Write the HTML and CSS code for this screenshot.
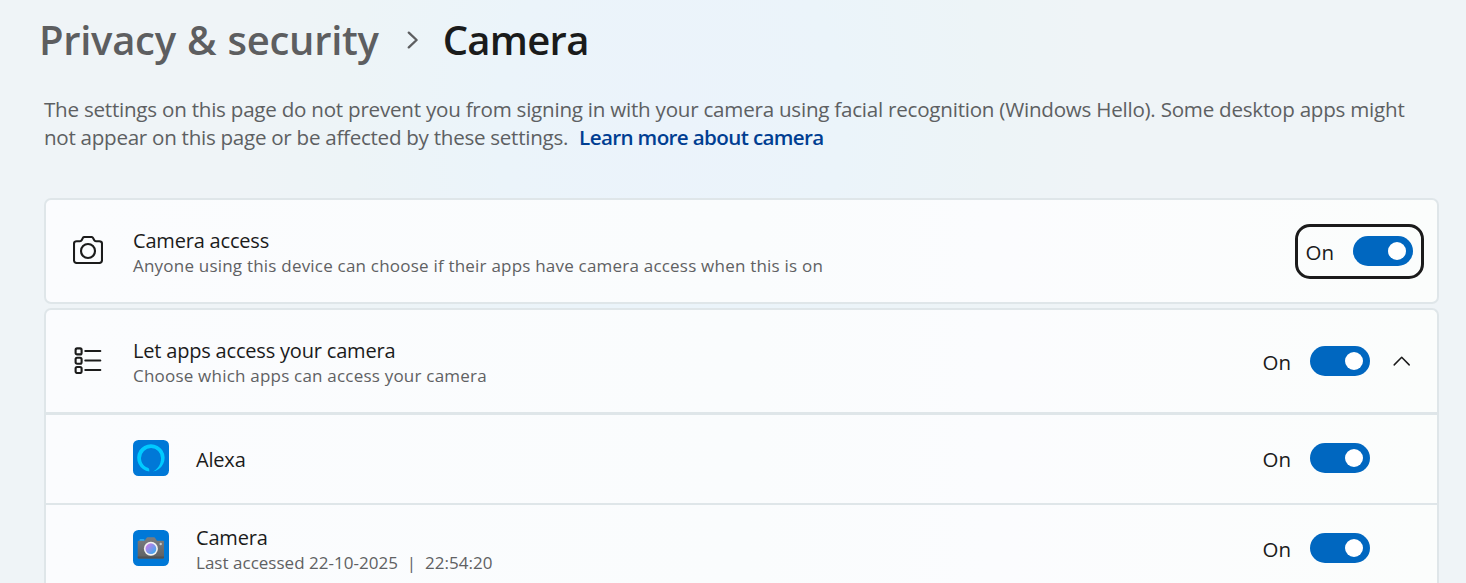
FILE: index.html
```html
<!DOCTYPE html>
<html lang="en">
<head>
<meta charset="utf-8">
<title>Privacy &amp; security - Camera</title>
<link rel="stylesheet" href="styles.css">
</head>
<body>
<main class="page">
  <nav class="breadcrumb">
    <span class="crumb">Privacy &amp; security</span>
    <svg class="crumb-arrow" width="12" height="18" viewBox="0 0 12 18"><path d="M1.8 1.6 9.6 9 1.8 16.4"/></svg>
    <h1 class="crumb current">Camera</h1>
  </nav>
  <p class="intro">The settings on this page do not prevent you from signing in with your camera using facial recognition (Windows Hello). Some desktop apps might<br><span class="intro-end">not appear on this page or be affected by these settings.</span><a class="link">Learn more about camera</a></p>

  <section class="card">
    <div class="row header-row">
      <svg class="row-icon" width="30" height="28" viewBox="0 0 30 28"><path d="M3.700 5.200H7c.9 0 1.400-.4 1.800-1.100l.8-1.700C10 1.500 10.600 1 11.500 1h7c.9 0 1.400.5 1.800 1.400l.8 1.700c.4.7.9 1.100 1.800 1.100h3.400C28 5.200 29 6.200 29 7.700v16.600c0 1.500-1 2.700-2.700 2.700H3.700C2 27 1 25.800 1 24.300V7.700C1 6.200 2 5.200 3.700 5.200Z"/><circle cx="15" cy="15" r="7"/></svg>
      <div class="labels"><div class="title">Camera access</div><div class="sub">Anyone using this device can choose if their apps have camera access when this is on</div></div>
      <div class="control focused"><span class="state">On</span><span class="toggle"></span></div>
    </div>
  </section>

  <section class="card group">
    <div class="row header-row">
      <svg class="row-icon" width="30" height="28" viewBox="0 0 30 28"><rect x="2.600" y="2.400" width="6" height="6" rx="1.500"/><rect x="2.600" y="11.700" width="6" height="6" rx="1.500"/><rect x="2.600" y="21" width="6" height="6" rx="1.500"/><path d="M12.300 5h15M12.300 14.500h15M12.300 24h15"/></svg>
      <div class="labels"><div class="title">Let apps access your camera</div><div class="sub">Choose which apps can access your camera</div></div>
      <div class="control"><span class="state">On</span><span class="toggle"></span></div>
      <svg class="chevron" width="18" height="12" viewBox="0 0 18 12"><path d="M1.200 9.900 8.700 2.300l7.500 7.600"/></svg>
    </div>
    <div class="row app-row">
      <svg class="app-icon" width="36" height="36" viewBox="0 0 36 36"><rect width="36" height="36" rx="5.500" fill="#0078d7"/><path fill="#00caff" fill-rule="evenodd" d="M16.300 31.500A13.700 13.700 0 1 1 19.500 31.500C24.600 29.400 28 24.500 28 18.200A10 10 0 1 0 8 18C8 22.800 11 26.600 14.900 27.800C16.100 28.200 16.400 29.500 16.300 31.500Z"/></svg>
      <div class="labels"><div class="title">Alexa</div></div>
      <div class="control"><span class="state">On</span><span class="toggle"></span></div>
    </div>
    <div class="row app-row">
      <svg class="app-icon" width="36" height="36" viewBox="0 0 36 36">
        <defs>
          <linearGradient id="body" x1="0" y1="0" x2="0" y2="1"><stop offset="0" stop-color="#7b7d80"/><stop offset="1" stop-color="#5e6063"/></linearGradient>
          <linearGradient id="lens" x1="0" y1="0" x2="1" y2="1"><stop offset=".2" stop-color="#b982e8"/><stop offset="1" stop-color="#27b0f2"/></linearGradient>
        </defs>
        <rect width="36" height="36" rx="5.500" fill="#0078d7"/>
        <rect x="6.500" y="9" width="5" height="3" rx="1" fill="#25a9f2"/>
        <path fill="url(#body)" d="M5.700 10.700H11.500L13.500 7.900Q13.900 7.300 14.600 7.300H21Q21.700 7.300 22.100 7.900L24 10.700H30.200Q31 10.700 31 11.500V27.500Q31 28.400 30.100 28.400H5.600Q4.700 28.400 4.700 27.500V11.700Q4.700 10.700 5.700 10.700Z"/>
        <path fill="#505255" d="M4.700 26.500H31v1Q31 28.400 30.100 28.400H5.600Q4.700 28.400 4.700 27.500Z"/>
        <circle cx="17.900" cy="18.700" r="7" fill="#f2f2f3"/><circle cx="17.900" cy="18.700" r="5.400" fill="url(#lens)"/><circle cx="27.700" cy="14" r="1.200" fill="#c5c9cc"/>
      </svg>
      <div class="labels"><div class="title">Camera</div><div class="sub accessed">Last accessed 22-10-2025 &nbsp;|&nbsp; 22:54:20</div></div>
      <div class="control"><span class="state">On</span><span class="toggle"></span></div>
    </div>
  </section>
</main>
</body>
</html>
```
FILE: styles.css
```css
* { box-sizing: border-box; }

body {
  margin: 0;
  font-family: "Open Sans", "Noto Sans", sans-serif;
  color: #1b1b1b;
  background: radial-gradient(ellipse 430px 520px at 670px 120px, #ebf3fb 0%, #ebf4fa 40%, #edf4f7 75%, #eff4f7 100%);
}

.page {
  display: flex;
  flex-direction: column;
  height: 583px;
  padding: 13px 27px 0 44px;
  overflow: hidden;
}

.breadcrumb {
  display: flex;
  flex: none;
  align-items: center;
  height: 54px;
  margin-left: -5px;
}

.crumb {
  margin: 0;
  font-size: 40px;
  font-weight: 600;
  line-height: 54px;
  letter-spacing: -.3px;
  word-spacing: 1.2px;
  color: #5d5e60;
  white-space: nowrap;
}

.crumb.current { letter-spacing: -.7px; color: #1a1b1b; }

.crumb-arrow { margin: 0 24px 0 28px; }

svg path, svg rect, svg circle { stroke-linecap: round; stroke-linejoin: round; }

.crumb-arrow path { fill: none; stroke: #5d5e60; stroke-width: 2.3; }

.intro {
  margin: 28px 0 47px;
  font-size: 20.6px;
  line-height: 28px;
  letter-spacing: -.24px;
  color: #5d6062;
  white-space: nowrap;
}

.intro-end { letter-spacing: -.28px; }

.link { margin-left: 11px; font-weight: 600; letter-spacing: -.63px; color: #003e92; }

.card {
  flex: none;
  border: 2px solid #dfe6e9;
  border-radius: 7px;
  background: linear-gradient(90deg, #fbfcfe 0%, #fafcfd 50%, #fbfcfe 68%, #fbfdfc 100%);
}

.group {
  flex: 1;
  min-height: 0;
  margin-top: 4px;
  border-bottom: 0;
  border-radius: 7px 7px 0 0;
  overflow: hidden;
}

.row { display: flex; align-items: center; }

.header-row { height: 102px; padding: 0 13px 0 27px; }

.app-row { height: 90px; padding: 0 67px 2px 87px; border-top: 2px solid #dfe6e9; }

.header-row + .app-row { border-top-width: 3px; height: 91px; }

.row-icon, .app-icon { flex: none; }

.row-icon { margin-bottom: 2px; }

.row-icon path, .row-icon rect, .row-icon circle { fill: none; stroke: #1b1b1b; stroke-width: 2.1; }

.labels { flex: 1; margin-left: 30px; padding-top: 2px; white-space: nowrap; }

.app-row .labels { margin-left: 27px; }

.title { font-size: 20px; line-height: 27px; letter-spacing: -.19px; }

.sub { font-size: 17px; line-height: 24px; letter-spacing: .21px; color: #5f6163; }

.accessed { letter-spacing: .02px; }

.control { display: flex; align-items: center; gap: 19px; }

.state { font-size: 20.5px; line-height: 28px; padding-top: 1px; }

.focused {
  height: 55px;
  padding: 0 8px 0 7px;
  border: 3px solid #1b1b1b;
  border-radius: 15px;
}

.toggle {
  display: flex;
  align-items: center;
  justify-content: flex-end;
  width: 60px;
  height: 30px;
  padding-right: 7px;
  border-radius: 15px;
  background: #0067c0;
}

.toggle::before { content: ""; width: 18px; height: 18px; border-radius: 50%; background: #fff; }

.chevron { margin: 0 13px 0 23px; }

.chevron path { fill: none; stroke: #1b1b1b; stroke-width: 1.5; }
```
